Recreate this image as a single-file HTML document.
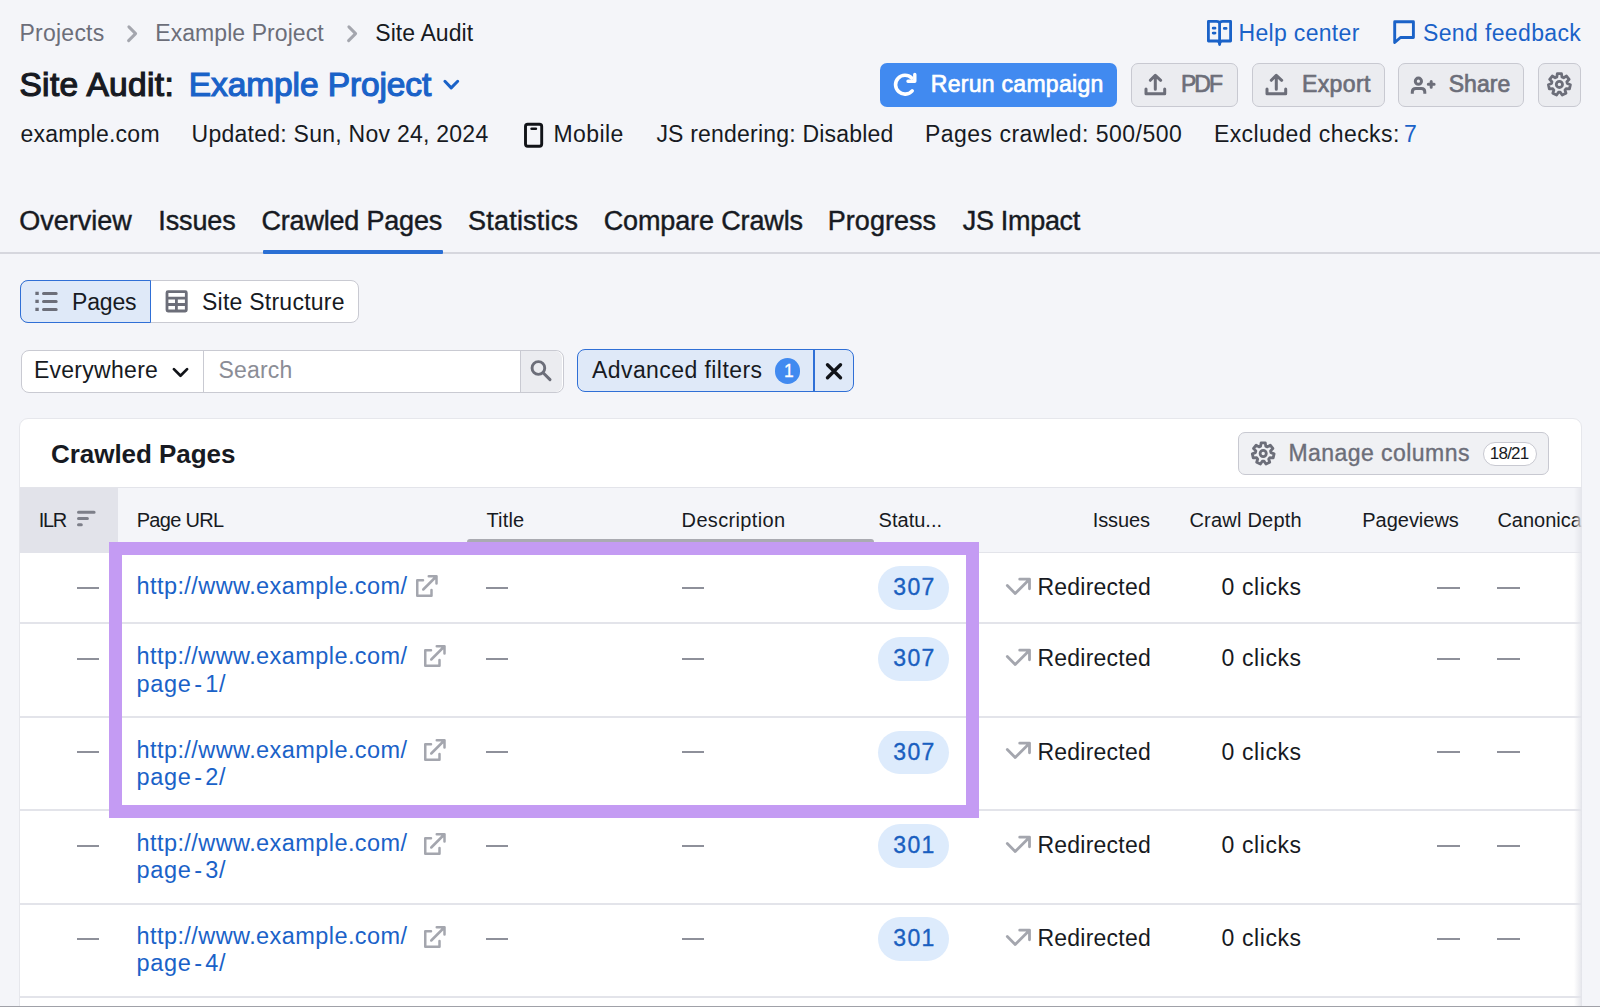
<!DOCTYPE html>
<html><head><meta charset="utf-8"><title>Site Audit: Crawled Pages</title>
<style>
html,body{margin:0;padding:0;}
body{width:1600px;height:1007px;overflow:hidden;background:#f4f5f9;position:relative;font-family:"Liberation Sans",sans-serif;}
.t{position:absolute;white-space:nowrap;line-height:1;}
.b{position:absolute;}
.i{position:absolute;overflow:visible;}
</style></head><body>
<svg class="i" style="left:120px;top:18px" width="30" height="30" viewBox="0 0 30 30" ><path d="M8.9 8.9 L15.6 15.6 L8.6 22.6" fill="none" stroke="#a4a6ae" stroke-width="3" stroke-linecap="round" stroke-linejoin="round"/></svg>
<svg class="i" style="left:340px;top:18px" width="30" height="30" viewBox="0 0 30 30" ><path d="M8.9 8.9 L15.6 15.6 L8.6 22.6" fill="none" stroke="#a4a6ae" stroke-width="3" stroke-linecap="round" stroke-linejoin="round"/></svg>
<svg class="i" style="left:1205px;top:18px" width="30" height="30" viewBox="0 0 30 30" ><g transform="translate(2,2)"><path d="M1.4 1.4 H9.5 Q12.6 1.4 12.6 3.5 Q12.6 1.4 15.7 1.4 H23.6 V21 H15 Q12.6 21 12.6 24.5 Q12.6 21 10.2 21 H1.4 Z M12.6 3.5 V24.5" fill="none" stroke="#1a62c8" stroke-width="2.8" stroke-linecap="round" stroke-linejoin="round"/><path d="M6.2 8.2 H8 M6.2 13.1 H8 M17.3 8.4 H19.1" fill="none" stroke="#1a62c8" stroke-width="2.8" stroke-linecap="round" stroke-linejoin="round"/></g></svg>
<svg class="i" style="left:1391px;top:18px" width="30" height="30" viewBox="0 0 30 30" ><g transform="translate(2,2)"><path d="M1.7 1.7 H20.4 V17.5 H7.5 L1.7 22.5 Z" fill="none" stroke="#1a62c8" stroke-width="2.9" stroke-linecap="round" stroke-linejoin="round"/></g></svg>
<svg class="i" style="left:436px;top:70px" width="30" height="30" viewBox="0 0 30 30" ><path d="M8.9 11.3 L15.2 17.9 L21.7 11.3" fill="none" stroke="#1a62c8" stroke-width="3" stroke-linecap="round" stroke-linejoin="round"/></svg>
<div class="b" style="left:880px;top:62.5px;width:237px;height:44px;background:#418af0;border-radius:7px"></div>
<svg class="i" style="left:888px;top:68px" width="35" height="35" viewBox="0 0 35 35" ><path d="M23.7 10.0 A9.45 9.45 0 1 0 24.2 22.8" fill="none" stroke="#fff" stroke-width="3.6" stroke-linecap="round" stroke-linejoin="round"/><path d="M20 13.3 H26.8 V6.5" fill="none" stroke="#fff" stroke-width="3.4" stroke-linecap="round" stroke-linejoin="round"/></svg>
<div class="b" style="left:1130.5px;top:62.5px;width:107.5px;height:44px;background:#ebecf0;border:1.5px solid #c8c9d1;border-radius:7px;box-sizing:border-box"></div>
<div class="b" style="left:1251.7px;top:62.5px;width:133.0px;height:44px;background:#ebecf0;border:1.5px solid #c8c9d1;border-radius:7px;box-sizing:border-box"></div>
<div class="b" style="left:1398.2px;top:62.5px;width:125.79999999999995px;height:44px;background:#ebecf0;border:1.5px solid #c8c9d1;border-radius:7px;box-sizing:border-box"></div>
<div class="b" style="left:1537.5px;top:62.5px;width:43.90000000000009px;height:44px;background:#ebecf0;border:1.5px solid #c8c9d1;border-radius:7px;box-sizing:border-box"></div>
<svg class="i" style="left:1139px;top:68px" width="35" height="35" viewBox="0 0 35 35" ><path d="M16.3 21.2 V7.6 M11.3 12.3 L16.3 7.3 L21.7 12.3 M7 20.9 V25.7 H25.7 V20.9" fill="none" stroke="#6c6e79" stroke-width="3" stroke-linecap="round" stroke-linejoin="round"/></svg>
<svg class="i" style="left:1260px;top:68px" width="35" height="35" viewBox="0 0 35 35" ><path d="M16.3 21.2 V7.6 M11.3 12.3 L16.3 7.3 L21.7 12.3 M7 20.9 V25.7 H25.7 V20.9" fill="none" stroke="#6c6e79" stroke-width="3" stroke-linecap="round" stroke-linejoin="round"/></svg>
<svg class="i" style="left:1405px;top:68px" width="35" height="35" viewBox="0 0 35 35" ><circle cx="13.4" cy="13.2" r="3.1" fill="none" stroke="#6c6e79" stroke-width="3" stroke-linecap="round" stroke-linejoin="round"/><path d="M7.3 25.8 V24 Q7.3 20.5 10.8 20.5 H16.3 Q19.8 20.5 19.8 24 V25.8" fill="none" stroke="#6c6e79" stroke-width="3" stroke-linecap="butt" stroke-linejoin="round"/><path d="M26.2 13.4 V19.2 M23.3 16.3 H29.1" fill="none" stroke="#6c6e79" stroke-width="3" stroke-linecap="round" stroke-linejoin="round"/></svg>
<svg class="i" style="left:1542px;top:67px" width="35" height="35" viewBox="0 0 35 35" ><path d="M14.83 9.93 L15.30 6.60 L19.50 6.60 L19.97 9.93 L21.64 10.73 L24.53 9.03 L27.15 12.31 L24.84 14.75 L25.25 16.55 L28.39 17.76 L27.46 21.85 L24.11 21.57 L22.96 23.01 L23.98 26.22 L20.19 28.04 L18.32 25.25 L16.48 25.25 L14.61 28.04 L10.82 26.22 L11.84 23.01 L10.69 21.57 L7.34 21.85 L6.41 17.76 L9.55 16.55 L9.96 14.75 L7.65 12.31 L10.27 9.03 L13.16 10.73 Z" fill="none" stroke="#6c6e79" stroke-width="2.8" stroke-linecap="round" stroke-linejoin="round"/><circle cx="17.4" cy="17.4" r="3.1" fill="none" stroke="#6c6e79" stroke-width="2.8" stroke-linecap="round" stroke-linejoin="round"/></svg>
<svg class="i" style="left:518px;top:118px" width="32" height="34" viewBox="0 0 32 34" ><rect x="7.5" y="6.2" width="16.2" height="22" rx="2.2" fill="none" stroke="#111318" stroke-width="2.9" stroke-linecap="round" stroke-linejoin="round"/><path d="M13.6 10.8 H17.9" fill="none" stroke="#111318" stroke-width="2.6" stroke-linecap="round" stroke-linejoin="round"/></svg>
<div class="b" style="left:0;top:252px;width:1600px;height:2px;background:#d6d7de"></div>
<div class="b" style="left:262.5px;top:249.5px;width:180.5px;height:4.5px;background:#2a6fd4;border-radius:1px"></div>
<div class="b" style="left:20px;top:279.5px;width:338.5px;height:43.5px;background:#fff;border:1.5px solid #c9cad2;border-radius:8px;box-sizing:border-box"></div>
<div class="b" style="left:20px;top:279.5px;width:131px;height:43.5px;background:#dfe9f8;border:1.5px solid #2f6fd6;border-radius:8px 0 0 8px;box-sizing:border-box"></div>
<svg class="i" style="left:30px;top:285px" width="35" height="33" viewBox="0 0 35 33" ><path d="M6.9 8.4 H7.2 M6.9 16.4 H7.2 M6.9 24.4 H7.2" fill="none" stroke="#6c6e79" stroke-width="3.1" stroke-linecap="square" stroke-linejoin="round"/><path d="M13.5 8.4 H26.2 M13.5 16.4 H26.2 M13.5 24.4 H26.2" fill="none" stroke="#6c6e79" stroke-width="3" stroke-linecap="round" stroke-linejoin="round"/></svg>
<svg class="i" style="left:160px;top:285px" width="35" height="33" viewBox="0 0 35 33" ><rect x="7" y="6.7" width="19.3" height="19.3" rx="1" fill="none" stroke="#6c6e79" stroke-width="2.8" stroke-linecap="round" stroke-linejoin="round"/><path d="M7 13.1 H26.3 M7 19.5 H26.3 M16.4 13.1 V26" fill="none" stroke="#6c6e79" stroke-width="2.8" stroke-linecap="butt" stroke-linejoin="round"/></svg>
<div class="b" style="left:20.5px;top:349.5px;width:543px;height:43.5px;background:#fff;border:1.5px solid #c9cad2;border-radius:8px;box-sizing:border-box"></div>
<div class="b" style="left:202.7px;top:350px;width:1.5px;height:42.5px;background:#c9cad2"></div>
<div class="b" style="left:520px;top:351px;width:42px;height:40.5px;background:#ebecf0;border-left:1.5px solid #c9cad2;border-radius:0 7px 7px 0;box-sizing:border-box"></div>
<svg class="i" style="left:168px;top:358px" width="26" height="26" viewBox="0 0 26 26" ><path d="M5.9 11.1 L12.5 17.8 L19.1 11.1" fill="none" stroke="#111318" stroke-width="2.7" stroke-linecap="round" stroke-linejoin="round"/></svg>
<svg class="i" style="left:525px;top:355px" width="35" height="35" viewBox="0 0 35 35" ><circle cx="13.4" cy="13" r="6.35" fill="none" stroke="#6c6e79" stroke-width="2.9" stroke-linecap="round" stroke-linejoin="round"/><path d="M18.1 17.8 L25 24.6" fill="none" stroke="#6c6e79" stroke-width="3" stroke-linecap="round" stroke-linejoin="round"/></svg>
<div class="b" style="left:577px;top:349.2px;width:277px;height:43.2px;background:#dfe9f8;border:1.5px solid #2f6fd6;border-radius:8px;box-sizing:border-box"></div>
<div class="b" style="left:813.2px;top:350px;width:1.5px;height:41.5px;background:#2f6fd6"></div>
<div class="b" style="left:775.3px;top:358.4px;width:25.2px;height:25.2px;background:#418af0;border-radius:50%"></div>
<svg class="i" style="left:820px;top:358px" width="28" height="26" viewBox="0 0 28 26" ><path d="M7.5 6.75 L20.5 19.75 M20.5 6.75 L7.5 19.75" fill="none" stroke="#111318" stroke-width="3.4" stroke-linecap="round" stroke-linejoin="round"/></svg>
<div class="b" style="left:18.5px;top:417.7px;width:1563.5px;height:700px;background:#fff;border:1.5px solid #e6e7ec;border-radius:9px;box-sizing:border-box"></div>
<div class="b" style="left:1238.3px;top:431.8px;width:311px;height:43px;background:#f0f1f4;border:1.5px solid #c8c9d1;border-radius:7px;box-sizing:border-box"></div>
<svg class="i" style="left:1245px;top:436px" width="36" height="36" viewBox="0 0 36 36" ><path d="M15.66 10.12 L16.12 6.80 L20.28 6.80 L20.74 10.12 L22.38 10.92 L25.27 9.20 L27.86 12.45 L25.55 14.89 L25.96 16.67 L29.09 17.85 L28.17 21.91 L24.83 21.62 L23.69 23.04 L24.72 26.24 L20.97 28.04 L19.11 25.25 L17.29 25.25 L15.43 28.04 L11.68 26.24 L12.71 23.04 L11.57 21.62 L8.23 21.91 L7.31 17.85 L10.44 16.67 L10.85 14.89 L8.54 12.45 L11.13 9.20 L14.02 10.92 Z" fill="none" stroke="#6c6e79" stroke-width="2.8" stroke-linecap="round" stroke-linejoin="round"/><circle cx="18.2" cy="17.5" r="3.1" fill="none" stroke="#6c6e79" stroke-width="2.8" stroke-linecap="round" stroke-linejoin="round"/></svg>
<div class="b" style="left:1483.2px;top:441.6px;width:53.4px;height:24.2px;background:#fff;border:1.5px solid #c8c9d1;border-radius:12px;box-sizing:border-box"></div>
<div class="b" style="left:20px;top:487px;width:1561.5px;height:66px;background:#f4f5f9;border-top:1.5px solid #e3e4ea;border-bottom:1.5px solid #e3e4ea;box-sizing:border-box"></div>
<div class="b" style="left:20px;top:488px;width:97.5px;height:65px;background:#e2e3ea"></div>
<svg class="i" style="left:70px;top:505px" width="30" height="30" viewBox="0 0 30 30" ><path d="M8.5 7.15 H24.1 M8.5 13.4 H17.4 M8.5 19.7 H11.3" fill="none" stroke="#7d7f89" stroke-width="3" stroke-linecap="round" stroke-linejoin="round"/></svg>
<div class="b" style="left:467px;top:538.5px;width:407px;height:6px;background:#aaabb2;border-radius:3px"></div>
<div class="b" style="left:20px;top:622.25px;width:1561.5px;height:1.5px;background:#e3e4ea"></div>
<div class="b" style="left:76.5px;top:587px;width:22.400000000000006px;height:2px;background:#8e909a"></div>
<div class="b" style="left:485.5px;top:587px;width:22.0px;height:2px;background:#8e909a"></div>
<div class="b" style="left:681.5px;top:587px;width:22.799999999999955px;height:2px;background:#8e909a"></div>
<div class="b" style="left:1437px;top:587px;width:22.5px;height:2px;background:#8e909a"></div>
<div class="b" style="left:1497.3px;top:587px;width:22.700000000000045px;height:2px;background:#8e909a"></div>
<div class="b" style="left:877.5px;top:566.2px;width:71.2px;height:43.6px;background:#ddebfc;border-radius:22px"></div>
<svg class="i" style="left:416px;top:574.5px" width="22" height="22" viewBox="0 0 22 22" ><path d="M7 5.25 H1.25 V20.75 H15.5 V15 M7.25 14.5 L20.5 1.25 M12.75 1.25 H20.5 V8.5" fill="none" stroke="#a4a6ae" stroke-width="2.5" stroke-linecap="round" stroke-linejoin="round"/></svg>
<svg class="i" style="left:1000px;top:570px" width="36" height="30" viewBox="0 0 36 30" ><path d="M7.3 15.5 L15.2 23.5 L29.5 9.2 M19.7 9.2 H29.5 V18.8" fill="none" stroke="#a4a6ae" stroke-width="2.8" stroke-linecap="round" stroke-linejoin="round"/></svg>
<div class="b" style="left:20px;top:716.25px;width:1561.5px;height:1.5px;background:#e3e4ea"></div>
<div class="b" style="left:76.5px;top:658px;width:22.400000000000006px;height:2px;background:#8e909a"></div>
<div class="b" style="left:485.5px;top:658px;width:22.0px;height:2px;background:#8e909a"></div>
<div class="b" style="left:681.5px;top:658px;width:22.799999999999955px;height:2px;background:#8e909a"></div>
<div class="b" style="left:1437px;top:658px;width:22.5px;height:2px;background:#8e909a"></div>
<div class="b" style="left:1497.3px;top:658px;width:22.700000000000045px;height:2px;background:#8e909a"></div>
<div class="b" style="left:877.5px;top:637.2px;width:71.2px;height:43.6px;background:#ddebfc;border-radius:22px"></div>
<svg class="i" style="left:423.6px;top:645.4px" width="22" height="22" viewBox="0 0 22 22" ><path d="M7 5.25 H1.25 V20.75 H15.5 V15 M7.25 14.5 L20.5 1.25 M12.75 1.25 H20.5 V8.5" fill="none" stroke="#a4a6ae" stroke-width="2.5" stroke-linecap="round" stroke-linejoin="round"/></svg>
<svg class="i" style="left:1000px;top:641px" width="36" height="30" viewBox="0 0 36 30" ><path d="M7.3 15.5 L15.2 23.5 L29.5 9.2 M19.7 9.2 H29.5 V18.8" fill="none" stroke="#a4a6ae" stroke-width="2.8" stroke-linecap="round" stroke-linejoin="round"/></svg>
<div class="b" style="left:20px;top:809.25px;width:1561.5px;height:1.5px;background:#e3e4ea"></div>
<div class="b" style="left:76.5px;top:751.3px;width:22.400000000000006px;height:2px;background:#8e909a"></div>
<div class="b" style="left:485.5px;top:751.3px;width:22.0px;height:2px;background:#8e909a"></div>
<div class="b" style="left:681.5px;top:751.3px;width:22.799999999999955px;height:2px;background:#8e909a"></div>
<div class="b" style="left:1437px;top:751.3px;width:22.5px;height:2px;background:#8e909a"></div>
<div class="b" style="left:1497.3px;top:751.3px;width:22.700000000000045px;height:2px;background:#8e909a"></div>
<div class="b" style="left:877.5px;top:730.5px;width:71.2px;height:43.6px;background:#ddebfc;border-radius:22px"></div>
<svg class="i" style="left:423.6px;top:739px" width="22" height="22" viewBox="0 0 22 22" ><path d="M7 5.25 H1.25 V20.75 H15.5 V15 M7.25 14.5 L20.5 1.25 M12.75 1.25 H20.5 V8.5" fill="none" stroke="#a4a6ae" stroke-width="2.5" stroke-linecap="round" stroke-linejoin="round"/></svg>
<svg class="i" style="left:1000px;top:734.3px" width="36" height="30" viewBox="0 0 36 30" ><path d="M7.3 15.5 L15.2 23.5 L29.5 9.2 M19.7 9.2 H29.5 V18.8" fill="none" stroke="#a4a6ae" stroke-width="2.8" stroke-linecap="round" stroke-linejoin="round"/></svg>
<div class="b" style="left:20px;top:903.25px;width:1561.5px;height:1.5px;background:#e3e4ea"></div>
<div class="b" style="left:76.5px;top:845px;width:22.400000000000006px;height:2px;background:#8e909a"></div>
<div class="b" style="left:485.5px;top:845px;width:22.0px;height:2px;background:#8e909a"></div>
<div class="b" style="left:681.5px;top:845px;width:22.799999999999955px;height:2px;background:#8e909a"></div>
<div class="b" style="left:1437px;top:845px;width:22.5px;height:2px;background:#8e909a"></div>
<div class="b" style="left:1497.3px;top:845px;width:22.700000000000045px;height:2px;background:#8e909a"></div>
<div class="b" style="left:877.5px;top:824.2px;width:71.2px;height:43.6px;background:#ddebfc;border-radius:22px"></div>
<svg class="i" style="left:423.6px;top:832.8px" width="22" height="22" viewBox="0 0 22 22" ><path d="M7 5.25 H1.25 V20.75 H15.5 V15 M7.25 14.5 L20.5 1.25 M12.75 1.25 H20.5 V8.5" fill="none" stroke="#a4a6ae" stroke-width="2.5" stroke-linecap="round" stroke-linejoin="round"/></svg>
<svg class="i" style="left:1000px;top:828px" width="36" height="30" viewBox="0 0 36 30" ><path d="M7.3 15.5 L15.2 23.5 L29.5 9.2 M19.7 9.2 H29.5 V18.8" fill="none" stroke="#a4a6ae" stroke-width="2.8" stroke-linecap="round" stroke-linejoin="round"/></svg>
<div class="b" style="left:20px;top:996.25px;width:1561.5px;height:1.5px;background:#e3e4ea"></div>
<div class="b" style="left:76.5px;top:938px;width:22.400000000000006px;height:2px;background:#8e909a"></div>
<div class="b" style="left:485.5px;top:938px;width:22.0px;height:2px;background:#8e909a"></div>
<div class="b" style="left:681.5px;top:938px;width:22.799999999999955px;height:2px;background:#8e909a"></div>
<div class="b" style="left:1437px;top:938px;width:22.5px;height:2px;background:#8e909a"></div>
<div class="b" style="left:1497.3px;top:938px;width:22.700000000000045px;height:2px;background:#8e909a"></div>
<div class="b" style="left:877.5px;top:917.2px;width:71.2px;height:43.6px;background:#ddebfc;border-radius:22px"></div>
<svg class="i" style="left:423.6px;top:926px" width="22" height="22" viewBox="0 0 22 22" ><path d="M7 5.25 H1.25 V20.75 H15.5 V15 M7.25 14.5 L20.5 1.25 M12.75 1.25 H20.5 V8.5" fill="none" stroke="#a4a6ae" stroke-width="2.5" stroke-linecap="round" stroke-linejoin="round"/></svg>
<svg class="i" style="left:1000px;top:921px" width="36" height="30" viewBox="0 0 36 30" ><path d="M7.3 15.5 L15.2 23.5 L29.5 9.2 M19.7 9.2 H29.5 V18.8" fill="none" stroke="#a4a6ae" stroke-width="2.8" stroke-linecap="round" stroke-linejoin="round"/></svg>
<div class="t" style="left:19.50px;top:22.08px;font-size:23px;color:#6c6e79;letter-spacing:0.238px">Projects</div>
<div class="t" style="left:155.25px;top:22.08px;font-size:23px;color:#6c6e79;letter-spacing:0.067px">Example Project</div>
<div class="t" style="left:375.25px;top:22.08px;font-size:23px;color:#171a22;letter-spacing:0.077px">Site Audit</div>
<div class="t" style="left:1238.50px;top:22.13px;font-size:23px;color:#1a62c8;letter-spacing:0.324px">Help center</div>
<div class="t" style="left:1423.00px;top:22.13px;font-size:23px;color:#1a62c8;letter-spacing:0.362px">Send feedback</div>
<div class="t" style="left:19.40px;top:67.74px;font-size:33.5px;color:#171a22;-webkit-text-stroke:1.21px #171a22;letter-spacing:0.361px">Site Audit:</div>
<div class="t" style="left:188.80px;top:67.74px;font-size:33.5px;color:#1a62c8;-webkit-text-stroke:1.21px #1a62c8;letter-spacing:-0.100px">Example Project</div>
<div class="t" style="left:930.75px;top:72.58px;font-size:23px;color:#ffffff;-webkit-text-stroke:0.69px #ffffff;letter-spacing:0.291px">Rerun campaign</div>
<div class="t" style="left:1181.00px;top:72.58px;font-size:23px;color:#6c6e79;-webkit-text-stroke:0.69px #6c6e79;letter-spacing:-1.975px">PDF</div>
<div class="t" style="left:1302.00px;top:72.58px;font-size:23px;color:#6c6e79;-webkit-text-stroke:0.69px #6c6e79;letter-spacing:0.383px">Export</div>
<div class="t" style="left:1448.70px;top:72.58px;font-size:23px;color:#6c6e79;-webkit-text-stroke:0.69px #6c6e79;letter-spacing:0.079px">Share</div>
<div class="t" style="left:20.40px;top:122.93px;font-size:23px;color:#171a22;letter-spacing:0.238px">example.com</div>
<div class="t" style="left:191.60px;top:122.93px;font-size:23px;color:#171a22;letter-spacing:0.253px">Updated: Sun, Nov 24, 2024</div>
<div class="t" style="left:553.40px;top:122.93px;font-size:23px;color:#171a22;letter-spacing:0.428px">Mobile</div>
<div class="t" style="left:656.40px;top:122.93px;font-size:23px;color:#171a22;letter-spacing:0.200px">JS rendering: Disabled</div>
<div class="t" style="left:925.00px;top:122.93px;font-size:23px;color:#171a22;letter-spacing:0.477px">Pages crawled: 500/500</div>
<div class="t" style="left:1213.90px;top:122.93px;font-size:23px;color:#171a22;letter-spacing:0.434px">Excluded checks:</div>
<div class="t" style="left:1404.00px;top:122.93px;font-size:23px;color:#1a62c8">7</div>
<div class="t" style="left:19.30px;top:208.19px;font-size:27px;color:#171a22;-webkit-text-stroke:0.43px #171a22">Overview</div>
<div class="t" style="left:158.30px;top:208.19px;font-size:27px;color:#171a22;-webkit-text-stroke:0.43px #171a22;letter-spacing:-0.127px">Issues</div>
<div class="t" style="left:261.50px;top:208.19px;font-size:27px;color:#171a22;-webkit-text-stroke:0.43px #171a22;letter-spacing:-0.199px">Crawled Pages</div>
<div class="t" style="left:468.00px;top:208.19px;font-size:27px;color:#171a22;-webkit-text-stroke:0.43px #171a22;letter-spacing:0.219px">Statistics</div>
<div class="t" style="left:603.75px;top:208.19px;font-size:27px;color:#171a22;-webkit-text-stroke:0.43px #171a22;letter-spacing:-0.138px">Compare Crawls</div>
<div class="t" style="left:827.80px;top:208.19px;font-size:27px;color:#171a22;-webkit-text-stroke:0.43px #171a22;letter-spacing:0.023px">Progress</div>
<div class="t" style="left:962.80px;top:208.19px;font-size:27px;color:#171a22;-webkit-text-stroke:0.43px #171a22;letter-spacing:-0.317px">JS Impact</div>
<div class="t" style="left:72.00px;top:290.73px;font-size:23px;color:#171a22;letter-spacing:-0.179px">Pages</div>
<div class="t" style="left:202.00px;top:290.73px;font-size:23px;color:#171a22;letter-spacing:0.243px">Site Structure</div>
<div class="t" style="left:33.90px;top:358.73px;font-size:23px;color:#171a22;letter-spacing:0.284px">Everywhere</div>
<div class="t" style="left:218.50px;top:358.73px;font-size:23px;color:#8b8d96;letter-spacing:0.163px">Search</div>
<div class="t" style="left:592.00px;top:358.73px;font-size:23px;color:#171a22;letter-spacing:0.424px">Advanced filters</div>
<div class="t" style="left:784.00px;top:362.99px;font-size:17.5px;color:#ffffff;-webkit-text-stroke:0.28px #ffffff">1</div>
<div class="t" style="left:51.00px;top:441.19px;font-size:26px;color:#171a22;font-weight:700;letter-spacing:-0.043px">Crawled Pages</div>
<div class="t" style="left:1288.40px;top:441.73px;font-size:23px;color:#6c6e79;-webkit-text-stroke:0.37px #6c6e79;letter-spacing:0.450px">Manage columns</div>
<div class="t" style="left:1489.80px;top:445.41px;font-size:17.0px;color:#171a22;letter-spacing:-0.772px">18/21</div>
<div class="t" style="left:38.80px;top:509.87px;font-size:20px;color:#171a22;letter-spacing:-1.390px">ILR</div>
<div class="t" style="left:136.70px;top:509.87px;font-size:20px;color:#171a22;letter-spacing:-0.693px">Page URL</div>
<div class="t" style="left:486.50px;top:509.87px;font-size:20px;color:#171a22;letter-spacing:0.146px">Title</div>
<div class="t" style="left:681.60px;top:509.87px;font-size:20px;color:#171a22;letter-spacing:0.348px">Description</div>
<div class="t" style="left:878.60px;top:509.87px;font-size:20px;color:#171a22;letter-spacing:0.012px">Statu...</div>
<div class="t" style="left:1092.75px;top:509.87px;font-size:20px;color:#171a22;letter-spacing:-0.111px">Issues</div>
<div class="t" style="left:1189.40px;top:509.87px;font-size:20px;color:#171a22;letter-spacing:0.228px">Crawl Depth</div>
<div class="t" style="left:1362.30px;top:509.87px;font-size:20px;color:#171a22;letter-spacing:-0.027px">Pageviews</div>
<div class="t" style="left:1497.40px;top:509.87px;font-size:20px;color:#171a22">Canonical</div>
<div class="t" style="left:136.50px;top:574.61px;font-size:23.5px;color:#1a62c8;letter-spacing:0.424px">http://www.example.com/</div>
<div class="t" style="left:893.30px;top:576.33px;font-size:23px;color:#1a5fc0;-webkit-text-stroke:0.37px #1a5fc0;letter-spacing:1.308px">307</div>
<div class="t" style="left:1037.45px;top:576.33px;font-size:23px;color:#171a22;letter-spacing:0.235px">Redirected</div>
<div class="t" style="left:1221.50px;top:576.33px;font-size:23px;color:#171a22;letter-spacing:0.600px">0 clicks</div>
<div class="t" style="left:136.50px;top:644.91px;font-size:23.5px;color:#1a62c8;letter-spacing:0.424px">http://www.example.com/</div>
<div class="t" style="left:136.50px;top:672.51px;font-size:23.5px;color:#1a62c8;letter-spacing:0.721px">page<span style="margin:0 2.5px">-</span>1/</div>
<div class="t" style="left:893.30px;top:647.33px;font-size:23px;color:#1a5fc0;-webkit-text-stroke:0.37px #1a5fc0;letter-spacing:1.308px">307</div>
<div class="t" style="left:1037.45px;top:647.33px;font-size:23px;color:#171a22;letter-spacing:0.235px">Redirected</div>
<div class="t" style="left:1221.50px;top:647.33px;font-size:23px;color:#171a22;letter-spacing:0.600px">0 clicks</div>
<div class="t" style="left:136.50px;top:738.61px;font-size:23.5px;color:#1a62c8;letter-spacing:0.424px">http://www.example.com/</div>
<div class="t" style="left:136.50px;top:765.71px;font-size:23.5px;color:#1a62c8;letter-spacing:0.721px">page<span style="margin:0 2.5px">-</span>2/</div>
<div class="t" style="left:893.30px;top:740.63px;font-size:23px;color:#1a5fc0;-webkit-text-stroke:0.37px #1a5fc0;letter-spacing:1.308px">307</div>
<div class="t" style="left:1037.45px;top:740.63px;font-size:23px;color:#171a22;letter-spacing:0.235px">Redirected</div>
<div class="t" style="left:1221.50px;top:740.63px;font-size:23px;color:#171a22;letter-spacing:0.600px">0 clicks</div>
<div class="t" style="left:136.50px;top:831.51px;font-size:23.5px;color:#1a62c8;letter-spacing:0.424px">http://www.example.com/</div>
<div class="t" style="left:136.50px;top:859.11px;font-size:23.5px;color:#1a62c8;letter-spacing:0.721px">page<span style="margin:0 2.5px">-</span>3/</div>
<div class="t" style="left:893.30px;top:834.33px;font-size:23px;color:#1a5fc0;-webkit-text-stroke:0.37px #1a5fc0;letter-spacing:1.308px">301</div>
<div class="t" style="left:1037.45px;top:834.33px;font-size:23px;color:#171a22;letter-spacing:0.235px">Redirected</div>
<div class="t" style="left:1221.50px;top:834.33px;font-size:23px;color:#171a22;letter-spacing:0.600px">0 clicks</div>
<div class="t" style="left:136.50px;top:924.71px;font-size:23.5px;color:#1a62c8;letter-spacing:0.424px">http://www.example.com/</div>
<div class="t" style="left:136.50px;top:951.71px;font-size:23.5px;color:#1a62c8;letter-spacing:0.721px">page<span style="margin:0 2.5px">-</span>4/</div>
<div class="t" style="left:893.30px;top:927.33px;font-size:23px;color:#1a5fc0;-webkit-text-stroke:0.37px #1a5fc0;letter-spacing:1.308px">301</div>
<div class="t" style="left:1037.45px;top:927.33px;font-size:23px;color:#171a22;letter-spacing:0.235px">Redirected</div>
<div class="t" style="left:1221.50px;top:927.33px;font-size:23px;color:#171a22;letter-spacing:0.600px">0 clicks</div>
<div class="b" style="left:1581.5px;top:418px;width:18.5px;height:600px;background:#f4f5f9"></div>
<div class="b" style="left:1574px;top:487px;width:8px;height:520px;background:linear-gradient(90deg,rgba(220,221,228,0),#e4e5eb)"></div>
<div class="b" style="left:109.3px;top:541.8px;width:869.4px;height:276.2px;border:13px solid #c49bf3;box-sizing:border-box"></div>
<div class="b" style="left:0;top:1006px;width:1600px;height:1px;background:#a0a1a8"></div>
</body></html>
